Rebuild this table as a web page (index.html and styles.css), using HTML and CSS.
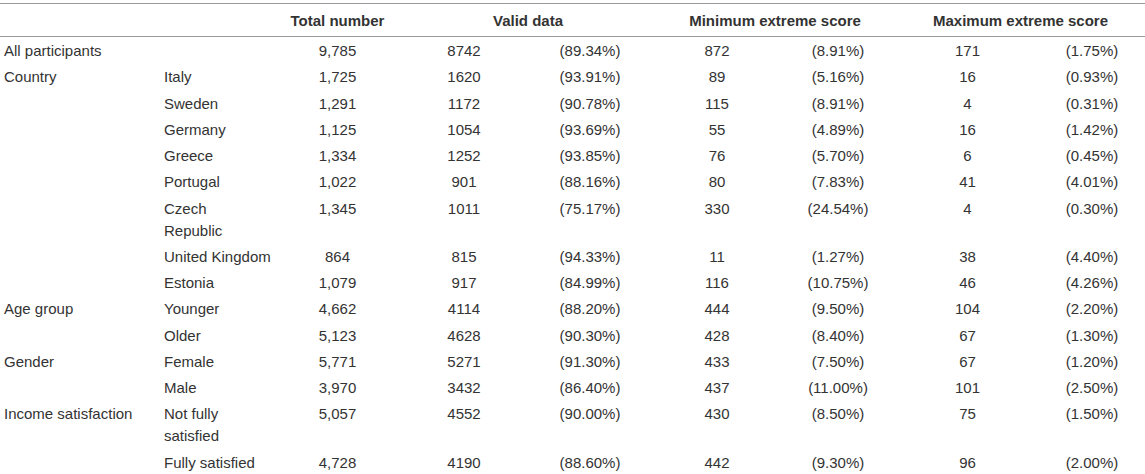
FILE: index.html
```html
<!DOCTYPE html>
<html lang="en">
<head>
    <meta charset="UTF-8">
    <meta name="viewport" content="width=device-width, initial-scale=1.0">
    <title>Extreme scores by group</title>
    <link rel="stylesheet" href="styles.css">
</head>
<body>
    <table class="scores">
        <colgroup>
            <col class="col-group">
            <col class="col-sub">
            <col class="col-total">
            <col class="col-valid-n">
            <col class="col-valid-pct">
            <col class="col-min-n">
            <col class="col-min-pct">
            <col class="col-max-n">
            <col class="col-max-pct">
        </colgroup>
        <thead>
            <tr>
                <th></th>
                <th></th>
                <th>Total number</th>
                <th colspan="2">Valid data</th>
                <th colspan="2">Minimum extreme score</th>
                <th colspan="2">Maximum extreme score</th>
            </tr>
        </thead>
        <tbody>
            <tr>
                <td class="label">All participants</td>
                <td class="label"></td>
                <td>9,785</td><td>8742</td><td>(89.34%)</td><td>872</td><td>(8.91%)</td><td>171</td><td>(1.75%)</td>
            </tr>
            <!-- Country -->
            <tr>
                <td class="label">Country</td>
                <td class="label sub">Italy</td>
                <td>1,725</td><td>1620</td><td>(93.91%)</td><td>89</td><td>(5.16%)</td><td>16</td><td>(0.93%)</td>
            </tr>
            <tr>
                <td class="label"></td>
                <td class="label sub">Sweden</td>
                <td>1,291</td><td>1172</td><td>(90.78%)</td><td>115</td><td>(8.91%)</td><td>4</td><td>(0.31%)</td>
            </tr>
            <tr>
                <td class="label"></td>
                <td class="label sub">Germany</td>
                <td>1,125</td><td>1054</td><td>(93.69%)</td><td>55</td><td>(4.89%)</td><td>16</td><td>(1.42%)</td>
            </tr>
            <tr>
                <td class="label"></td>
                <td class="label sub">Greece</td>
                <td>1,334</td><td>1252</td><td>(93.85%)</td><td>76</td><td>(5.70%)</td><td>6</td><td>(0.45%)</td>
            </tr>
            <tr>
                <td class="label"></td>
                <td class="label sub">Portugal</td>
                <td>1,022</td><td>901</td><td>(88.16%)</td><td>80</td><td>(7.83%)</td><td>41</td><td>(4.01%)</td>
            </tr>
            <tr>
                <td class="label"></td>
                <td class="label sub">Czech Republic</td>
                <td>1,345</td><td>1011</td><td>(75.17%)</td><td>330</td><td>(24.54%)</td><td>4</td><td>(0.30%)</td>
            </tr>
            <tr>
                <td class="label"></td>
                <td class="label sub">United&nbsp;Kingdom</td>
                <td>864</td><td>815</td><td>(94.33%)</td><td>11</td><td>(1.27%)</td><td>38</td><td>(4.40%)</td>
            </tr>
            <tr>
                <td class="label"></td>
                <td class="label sub">Estonia</td>
                <td>1,079</td><td>917</td><td>(84.99%)</td><td>116</td><td>(10.75%)</td><td>46</td><td>(4.26%)</td>
            </tr>
            <!-- Age group -->
            <tr>
                <td class="label">Age group</td>
                <td class="label sub">Younger</td>
                <td>4,662</td><td>4114</td><td>(88.20%)</td><td>444</td><td>(9.50%)</td><td>104</td><td>(2.20%)</td>
            </tr>
            <tr>
                <td class="label"></td>
                <td class="label sub">Older</td>
                <td>5,123</td><td>4628</td><td>(90.30%)</td><td>428</td><td>(8.40%)</td><td>67</td><td>(1.30%)</td>
            </tr>
            <!-- Gender -->
            <tr>
                <td class="label">Gender</td>
                <td class="label sub">Female</td>
                <td>5,771</td><td>5271</td><td>(91.30%)</td><td>433</td><td>(7.50%)</td><td>67</td><td>(1.20%)</td>
            </tr>
            <tr>
                <td class="label"></td>
                <td class="label sub">Male</td>
                <td>3,970</td><td>3432</td><td>(86.40%)</td><td>437</td><td>(11.00%)</td><td>101</td><td>(2.50%)</td>
            </tr>
            <!-- Income satisfaction -->
            <tr>
                <td class="label">Income satisfaction</td>
                <td class="label sub">Not fully satisfied</td>
                <td>5,057</td><td>4552</td><td>(90.00%)</td><td>430</td><td>(8.50%)</td><td>75</td><td>(1.50%)</td>
            </tr>
            <tr>
                <td class="label"></td>
                <td class="label sub">Fully satisfied</td>
                <td>4,728</td><td>4190</td><td>(88.60%)</td><td>442</td><td>(9.30%)</td><td>96</td><td>(2.00%)</td>
            </tr>
        </tbody>
    </table>
</body>
</html>
```

FILE: styles.css
```css
* {
    box-sizing: border-box;
    margin: 0;
    padding: 0;
}

body {
    font-family: 'Liberation Sans', Arial, sans-serif;
    font-size: 15px;
    line-height: 22px;
    color: #333333;
    background-color: #ffffff;
}

.scores {
    width: 1145px;
    margin-top: 3px;
    border-collapse: collapse;
    table-layout: fixed;
    border-top: 1px solid #9a9a9a;
}

.col-group { width: 160px; }
.col-sub { width: 113px; }
.col-total { width: 129px; }
.col-valid-n { width: 124px; }
.col-valid-pct { width: 128px; }
.col-min-n { width: 126px; }
.col-min-pct { width: 116px; }
.col-max-n { width: 143px; }
.col-max-pct { width: 106px; }

.scores th {
    font-weight: bold;
    text-align: center;
    padding: 6px 0 4px;
    border-bottom: 1px solid #9a9a9a;
}

.scores td {
    text-align: center;
    vertical-align: top;
    padding: 3px 0 1.25px;
}

.scores td.label {
    text-align: left;
    padding-left: 4px;
}

.scores td.sub {
    padding-right: 12px;
}
```
